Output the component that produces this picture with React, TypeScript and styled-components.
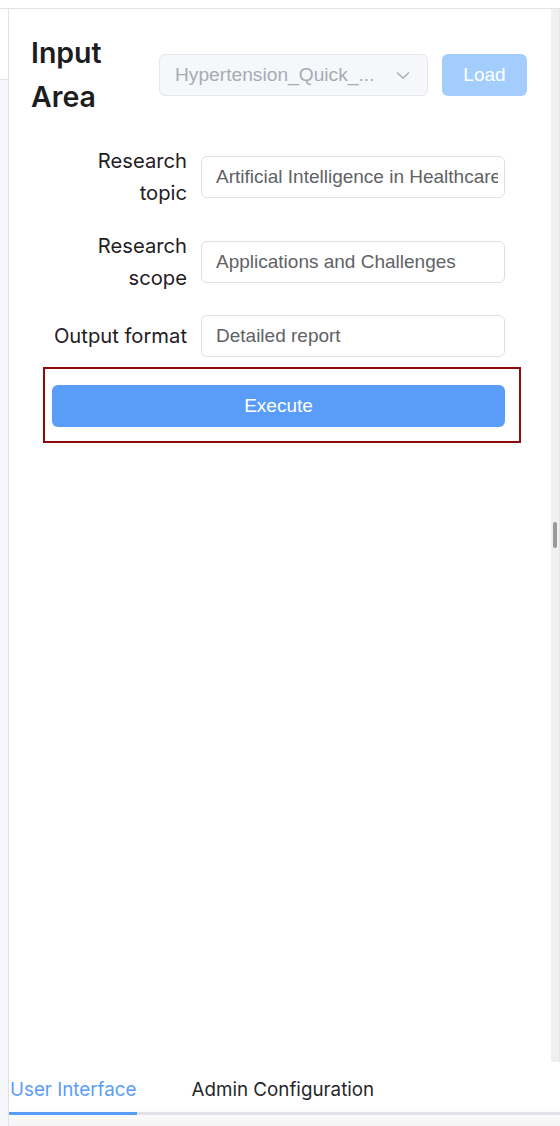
import styled, { createGlobalStyle } from "styled-components";

const GlobalStyle = createGlobalStyle`
  html, body {
    margin: 0;
    padding: 0;
    background: #ffffff;
  }
  * {
    box-sizing: border-box;
  }
`;

const Page = styled.div`
  width: 560px;
  height: 1126px;
  display: flex;
  flex-direction: column;
  overflow: hidden;
  background: #ffffff;
`;

const TopBar = styled.div`
  height: 9px;
  flex: none;
  border-bottom: 1px solid #e2e3e8;
`;

const Body = styled.div`
  flex: 1;
  display: flex;
  min-height: 0;
`;

const SideStrip = styled.div`
  width: 9px;
  flex: none;
  display: flex;
  flex-direction: column;
  border-right: 1px solid #e2e3e8;
`;

const SideTop = styled.div`
  height: 71px;
  border-bottom: 1px solid #e2e3e8;
  background: #ffffff;
`;

const SideRest = styled.div`
  flex: 1;
  background: #f6f7fa;
`;

const MainColumn = styled.div`
  flex: 1;
  display: flex;
  flex-direction: column;
  min-width: 0;
`;

const ScrollArea = styled.div`
  height: 1053px;
  flex: none;
  display: flex;
`;

const Panel = styled.div`
  flex: 1;
  padding: 22px 21px 0 22px;
  display: flex;
  flex-direction: column;
`;

const Track = styled.div`
  width: 9px;
  flex: none;
  background: #f0f0f0;
  border-right: 1px solid #e6e6e6;
  padding: 513px 0 0 2px;
`;

const Thumb = styled.div`
  width: 4px;
  height: 26px;
  border-radius: 2px;
  background: #9a9a9e;
`;

const Header = styled.div`
  display: flex;
  align-items: center;
  gap: 14px;
`;

const Heading = styled.h2`
  margin: 0;
  width: 114px;
  flex: none;
  font-family: Inter, "Noto Sans", sans-serif;
  font-size: 28.5px;
  font-weight: 600;
  line-height: 44px;
  color: #1d1d1f;
`;

const Select = styled.div`
  width: 269px;
  height: 42px;
  flex: none;
  display: flex;
  align-items: center;
  justify-content: space-between;
  padding: 0 16px 0 15px;
  background: #f5f7fa;
  border: 1px solid #e4e7ed;
  border-radius: 6px;
  font-family: "Liberation Sans", Arial, sans-serif;
  font-size: 19.2px;
  color: #a8abb2;
`;

const LoadButton = styled.button`
  width: 85px;
  height: 42px;
  flex: none;
  border: none;
  border-radius: 6px;
  background: #a3cdfc;
  color: #ffffff;
  font-family: "Liberation Sans", Arial, sans-serif;
  font-size: 19px;
  cursor: not-allowed;
`;

const Form = styled.form`
  margin-top: 26px;
  padding-right: 25px;
  display: flex;
  flex-direction: column;
`;

const Row = styled.div<{ $last?: boolean }>`
  display: grid;
  grid-template-columns: 156px 1fr;
  column-gap: 14px;
  align-items: center;
  margin-bottom: ${(p) => (p.$last ? "10px" : "21px")};
`;

const Label = styled.label`
  padding-left: 18px;
  text-align: right;
  font-family: Inter, "Noto Sans", sans-serif;
  font-size: 20.2px;
  line-height: 32px;
  color: #1f2023;
`;

const Input = styled.input`
  width: 100%;
  height: 42px;
  padding: 0 6px 0 14px;
  border: 1px solid #dcdfe6;
  border-radius: 6px;
  background: #ffffff;
  font-family: "Liberation Sans", Arial, sans-serif;
  font-size: 19px;
  color: #606266;
  outline: none;
`;

const Highlight = styled.div`
  margin: 0 -16px 0 12px;
  border: 2px solid #8f0a0a;
  padding: 16px 14px 14px 7px;
`;

const ExecuteButton = styled.button`
  width: 100%;
  height: 42px;
  border: none;
  border-radius: 6px;
  background: #599df8;
  color: #ffffff;
  font-family: "Liberation Sans", Arial, sans-serif;
  font-size: 19px;
  cursor: pointer;
`;

const TabBar = styled.div`
  flex: 1;
  padding-top: 4px;
  background: linear-gradient(to bottom, #ffffff 70%, #f4f4f6 100%);
`;

const TabList = styled.div`
  display: flex;
  gap: 55px;
  border-bottom: 3px solid #e2e3e8;
`;

const Tab = styled.div<{ $active?: boolean }>`
  height: 49px;
  display: flex;
  align-items: center;
  padding-left: ${(p) => (p.$active ? "1px" : "0")};
  margin-bottom: -3px;
  border-bottom: 3px solid ${(p) => (p.$active ? "#599df8" : "transparent")};
  font-family: Inter, "Noto Sans", sans-serif;
  font-size: 18.8px;
  color: ${(p) => (p.$active ? "#599df8" : "#26272b")};
`;

const Chevron = () => (
  <svg width="16" height="16" viewBox="0 0 16 16" fill="none">
    <path d="M2 5.5 L8 11 L14 5.5" stroke="#a8abb2" strokeWidth="1.3" />
  </svg>
);

const fields = [
  { label: "Research topic", value: "Artificial Intelligence in Healthcare" },
  { label: "Research scope", value: "Applications and Challenges" },
  { label: "Output format", value: "Detailed report" },
];

export default function App() {
  return (
    <>
      <GlobalStyle />
      <Page>
        <TopBar />
        <Body>
          <SideStrip>
            <SideTop />
            <SideRest />
          </SideStrip>
          <MainColumn>
            <ScrollArea>
              <Panel>
                <Header>
                  <Heading>Input Area</Heading>
                  <Select>
                    <span>Hypertension_Quick_...</span>
                    <Chevron />
                  </Select>
                  <LoadButton type="button" disabled>
                    Load
                  </LoadButton>
                </Header>
                <Form onSubmit={(e) => e.preventDefault()}>
                  {fields.map((f, i) => (
                    <Row key={f.label} $last={i === fields.length - 1}>
                      <Label>{f.label}</Label>
                      <Input defaultValue={f.value} />
                    </Row>
                  ))}
                  <Highlight>
                    <ExecuteButton type="submit">Execute</ExecuteButton>
                  </Highlight>
                </Form>
              </Panel>
              <Track>
                <Thumb />
              </Track>
            </ScrollArea>
            <TabBar>
              <TabList>
                <Tab $active>User Interface</Tab>
                <Tab>Admin Configuration</Tab>
              </TabList>
            </TabBar>
          </MainColumn>
        </Body>
      </Page>
    </>
  );
}
